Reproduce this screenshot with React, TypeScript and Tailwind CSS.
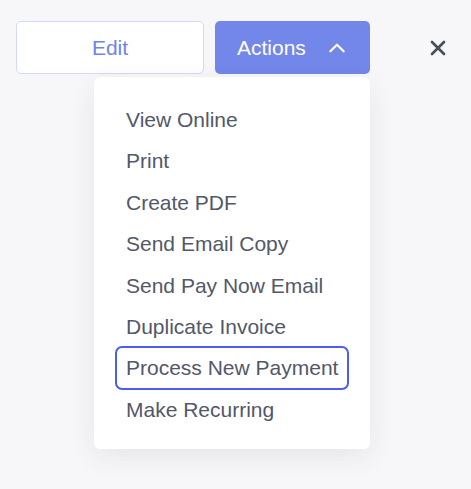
import React from 'react';

const items = [
  'View Online',
  'Print',
  'Create PDF',
  'Send Email Copy',
  'Send Pay Now Email',
  'Duplicate Invoice',
  'Process New Payment',
  'Make Recurring',
];

export default function App() {
  const active = 'Process New Payment';

  return (
    <div
      className="w-[471px] h-[489px] bg-[#f7f7f9] overflow-hidden"
      style={{ fontFamily: '"Liberation Sans", Arial, sans-serif' }}
    >
      <div className="flex items-start pt-[21px] pl-[16px]">
        <button className="w-[188px] h-[53px] bg-white border border-[#d3d9fb] rounded-[5px] text-[21px] text-[#6f82ef]">
          Edit
        </button>

        {/* Actions + dropdown */}
        <div className="relative ml-[11px]">
          <button className="w-[155px] h-[53px] bg-[#7386ea] rounded-[5px] text-[21px] text-white flex items-center pl-[22px] gap-[21px]">
            <span>Actions</span>
            <svg viewBox="0 0 24 24" width="20" height="20" fill="none" stroke="white" strokeWidth="2.6" strokeLinecap="round" strokeLinejoin="round">
              <path d="M4 16l8-8 8 8" />
            </svg>
          </button>

          <div className="absolute top-[56px] right-0 w-[276px] bg-white rounded-[6px] shadow-[0_8px_28px_rgba(40,40,80,0.08)] pt-[22px] pb-[19px] text-[21px] text-[#525869]">
            {items.map((label) => (
              <div
                key={label}
                className={`mx-[22px] h-[41.4px] flex items-center px-[10px] whitespace-nowrap rounded-[6px] ${
                  label === active ? 'outline-[2.5px] outline-[#4b5ef0] outline-offset-[-1.5px]' : ''
                }`}
              >
                {label}
              </div>
            ))}
          </div>
        </div>

        <button className="ml-[59px] mt-[18px] text-[#4a4e5b]">
          <svg viewBox="0 0 24 24" width="18" height="18" fill="none" stroke="currentColor" strokeWidth="3.6" strokeLinecap="round">
            <path d="M4 4l16 16M20 4L4 20" />
          </svg>
        </button>
      </div>
    </div>
  );
}
